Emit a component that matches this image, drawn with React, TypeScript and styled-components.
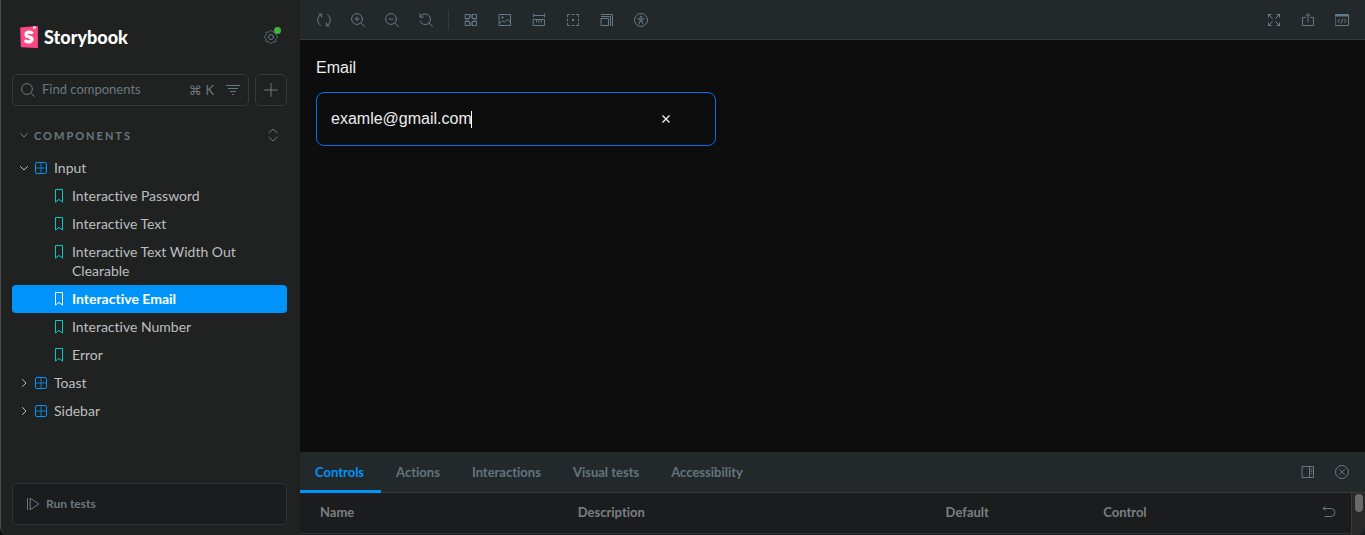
import React from "react";
import styled, { createGlobalStyle } from "styled-components";

const c = {
  side: "#202221",
  bar: "#23282b",
  canvas: "#0d0d0d",
  panel: "#1b1c1d",
  border: "#363a3b",
  muted: "#6b7880",
  icon: "#657a86",
  tab: "#62757f",
  text: "#bcbfc0",
  accent: "#0094fb",
  teal: "#00ccc5",
};

const GlobalStyle = createGlobalStyle`
  *, *::before, *::after { box-sizing: border-box; }
  body { margin: 0; background: ${c.canvas}; font-family: Lato, "Noto Sans", sans-serif; font-size: 14px; font-variant-ligatures: none; color: ${c.text}; }
  button, input { font: inherit; font-variant-ligatures: none; color: inherit; background: none; border: 0; padding: 0; margin: 0; outline: none; }
  button { cursor: pointer; }
  a { color: inherit; text-decoration: none; }
  ul { list-style: none; margin: 0; padding: 0; }
  svg { display: block; flex: none; }
`;

const Shell = styled.div`
  display: grid;
  grid-template-columns: 300px minmax(0, 1fr);
  min-height: 100vh;
`;

const Sidebar = styled.aside`
  display: flex;
  flex-direction: column;
  background: ${c.side};
  border-left: 1px solid #4b4e4e;
  border-bottom-left-radius: 8px;
  padding: 22px 13px 10px 11px;
`;

const Brand = styled.header`
  display: flex;
  align-items: center;
  justify-content: space-between;
  height: 30px;
  padding: 0 2px 0 8px;
`;

const BrandLink = styled.a`
  display: flex;
  align-items: center;
  gap: 6px;
  color: #ffffff;
  font-size: 18px;
  font-weight: 900;
`;

const SettingsButton = styled.button`
  position: relative;
  display: grid;
  place-items: center;
  width: 28px;
  height: 28px;
  color: ${c.icon};
`;

const Dot = styled.span`
  position: absolute;
  top: 4px;
  right: 4px;
  width: 7px;
  height: 7px;
  border-radius: 50%;
  background: #42b13c;
`;

const SearchRow = styled.div`
  display: flex;
  gap: 6px;
  margin-top: 22px;
`;

const SearchBox = styled.label`
  display: flex;
  align-items: center;
  flex: 1;
  min-width: 0;
  height: 32px;
  padding: 0 8px;
  border: 1px solid ${c.border};
  border-radius: 5px;
  color: ${c.muted};
`;

const SearchInput = styled.input`
  flex: 1;
  min-width: 0;
  margin-left: 7px;
  padding-bottom: 2px;
  font-size: 13px;
  &::placeholder { color: ${c.muted}; opacity: 1; }
`;

const Shortcut = styled.kbd`
  display: flex;
  align-items: center;
  gap: 4px;
  margin-right: 12px;
  font-family: Lato, "DejaVu Sans", sans-serif;
  font-size: 13px;
`;

const AddButton = styled.button`
  display: grid;
  place-items: center;
  width: 32px;
  height: 32px;
  border: 1px solid ${c.border};
  border-radius: 5px;
  color: ${c.icon};
`;

const SectionHead = styled.div`
  display: flex;
  align-items: center;
  justify-content: space-between;
  height: 28px;
  margin: 15px 0 5px;
  padding: 0 7px;
  color: ${c.muted};
`;

const SectionButton = styled.button`
  display: flex;
  align-items: center;
  gap: 6px;
  font-size: 11px;
  font-weight: 700;
  letter-spacing: 2px;
`;

const PlainButton = styled.button`
  display: grid;
  place-items: center;
  color: ${c.icon};
`;

const Item = styled.a<{ $child?: boolean; $active?: boolean }>`
  display: flex;
  align-items: flex-start;
  gap: ${(p) => (p.$child ? 8 : 6)}px;
  min-height: 28px;
  padding: 4px 30px 5px ${(p) => (p.$child ? 42 : 7)}px;
  line-height: 19px;
  border-radius: 4px;
  color: ${(p) => (p.$active ? "#ffffff" : c.text)};
  background: ${(p) => (p.$active ? c.accent : "transparent")};
  font-weight: ${(p) => (p.$active ? 700 : 400)};
  svg { margin-top: 3px; }
`;

const FolderIcon = styled.span`
  color: ${c.accent};
`;

const RunTests = styled.button`
  display: flex;
  align-items: center;
  gap: 6px;
  height: 42px;
  margin-top: auto;
  padding: 0 13px;
  border: 1px solid #303334;
  border-radius: 4px;
  background: ${c.panel};
  color: ${c.muted};
  font-size: 12px;
  font-weight: 700;
`;

const RunLabel = styled.span`
  padding-bottom: 2px;
`;

const Main = styled.main`
  display: flex;
  flex-direction: column;
  min-width: 0;
`;

const Toolbar = styled.div`
  display: flex;
  justify-content: space-between;
  height: 40px;
  padding: 0 9px 0 10px;
  background: ${c.bar};
  border-bottom: 1px solid ${c.border};
`;

const Group = styled.div`
  display: flex;
  align-items: center;
  gap: 6px;
`;

const ToolButton = styled.button`
  display: grid;
  place-items: center;
  width: 28px;
  height: 28px;
  color: ${c.icon};
`;

const Divider = styled.span`
  width: 1px;
  height: 20px;
  margin: 0 2px;
  background: ${c.border};
`;

const Canvas = styled.section`
  flex: 1;
  padding: 16px;
  color: #ededed;
  font-family: "Liberation Sans", Arial, sans-serif;
  font-size: 16px;
`;

const FieldLabel = styled.label`
  display: block;
  line-height: 24px;
  margin-bottom: 12px;
`;

const Field = styled.div`
  display: flex;
  align-items: center;
  width: 400px;
  max-width: 100%;
  height: 54px;
  padding: 0 41px 0 14px;
  border: 1px solid #0070f3;
  border-radius: 8px;
`;

const EmailInput = styled.input`
  field-sizing: content;
  caret-color: transparent;
`;

const Caret = styled.span`
  width: 1px;
  height: 17px;
  margin-left: -1px;
  background: #ffffff;
`;

const ClearButton = styled.button`
  display: grid;
  place-items: center;
  width: 16px;
  height: 24px;
  margin-left: auto;
`;

const Panel = styled.section`
  background: ${c.panel};
`;

const TabBar = styled.div`
  display: flex;
  justify-content: space-between;
  height: 41px;
  padding-right: 9px;
  background: ${c.bar};
  border-bottom: 1px solid ${c.border};
`;

const Tabs = styled.div`
  display: flex;
`;

const Tab = styled.button<{ $active?: boolean }>`
  height: 41px;
  padding: 1px 17px 0 15px;
  border-bottom: 3px solid ${(p) => (p.$active ? c.accent : "transparent")};
  color: ${(p) => (p.$active ? c.accent : c.tab)};
  font-size: 13px;
  font-weight: 700;
`;

const PanelBody = styled.div`
  display: flex;
  height: 42px;
`;

const Table = styled.table`
  flex: 1;
  height: 41px;
  table-layout: fixed;
  border-collapse: collapse;
  border-bottom: 1px solid #303334;
  color: #7c7f80;
  font-size: 13px;
`;

const Th = styled.th<{ $width: number; $first?: boolean }>`
  width: ${(p) => p.$width}%;
  padding: 0 15px 2px ${(p) => (p.$first ? 20 : 15)}px;
  text-align: left;
  font-weight: 700;
`;

const ThInner = styled.div`
  display: flex;
  align-items: center;
  justify-content: space-between;
`;

const Scroll = styled.div`
  width: 14px;
  padding: 1px 0 0 3px;
  background: #282828;
  border-left: 1px solid #383838;
  border-bottom-right-radius: 8px;
`;

const Thumb = styled.div`
  width: 8px;
  height: 18px;
  border-radius: 4px;
  background: #696969;
`;

const Svg = ({ children }: { children: React.ReactNode }) => (
  <svg width="14" height="14" viewBox="0 0 14 14" fill="none" stroke="currentColor" strokeLinecap="round" strokeLinejoin="round" aria-hidden="true">
    {children}
  </svg>
);

// Outline of a cog with eight soft teeth
const cog = Array.from({ length: 96 }, (_, i) => {
  const a = (i / 96) * Math.PI * 2;
  const r = 5.9 + 0.65 * Math.cos(8 * a);
  return `${(7 + r * Math.cos(a)).toFixed(2)},${(7 + r * Math.sin(a)).toFixed(2)}`;
}).join(" ");

const icons = {
  sync: (
    <>
      <path d="M4.4 1.2A6.4 6.4 0 0 0 3.6 12.4M9.6 12.8A6.4 6.4 0 0 0 10.4 1.6" />
      <path d="M1.8 1.2h2.8V4M12.2 12.8H9.4V10" />
    </>
  ),
  zoomIn: (
    <>
      <circle cx="6" cy="6" r="5.4" />
      <path d="M10 10l3.5 3.5M6 4v4M4 6h4" />
    </>
  ),
  zoomOut: (
    <>
      <circle cx="6" cy="6" r="5.4" />
      <path d="M10 10l3.5 3.5M4 6h4" />
    </>
  ),
  zoomReset: <path d="M1 .8v3.4h3.4M1.3 3.8A5.4 5.4 0 1 1 1 8M10 10l3.5 3.5" />,
  grid: (
    <>
      <path d="M1.5 1.5h4v4h-4zM8.5 1.5h4v4h-4zM1.5 8.5h4v4h-4zM8.5 8.5h4v4h-4z" strokeLinejoin="miter" />
      <path d="M5 1h4v4H5zM1 5h4v4H1zM9 5h4v4H9zM5 9h4v4H5z" fill="currentColor" stroke="none" opacity=".4" />
    </>
  ),
  photo: (
    <>
      <path d="M1.5 1.5h11v11h-11zM1.5 10.5l3-3 2 2 3-3.5 3 3.5" strokeLinejoin="miter" />
      <circle cx="4.5" cy="4.5" r=".8" />
    </>
  ),
  ruler: <path d="M1.5 1v3M12.5 1v3M1.5 2.5h11M1.5 6.5h11v6h-11zM4.5 6.5V9M7 6.5v3M9.5 6.5V9" strokeLinejoin="miter" />,
  outline: (
    <>
      <path d="M1.5 4V1.5H4M10 1.5h2.5V4M12.5 10v2.5H10M4 12.5H1.5V10M5.5 1.5h3M5.5 12.5h3M1.5 5.5v3M12.5 5.5v3" strokeLinecap="butt" strokeLinejoin="miter" />
      <path d="M6 6h2v2H6z" fill="currentColor" stroke="none" />
    </>
  ),
  grow: <path d="M1.5 5.5h7v7h-7zM1.5 3.5h9v9M1.5 1.5h11v11" strokeLinecap="square" strokeLinejoin="miter" />,
  access: (
    <>
      <circle cx="7" cy="7" r="6.5" />
      <circle cx="7" cy="3.6" r=".7" fill="currentColor" />
      <path d="M3.8 5.6L7 6l3.2-.4M6.1 6v2.2L5 11M7.9 6v2.2L9 11M6.1 8.2h1.8" />
    </>
  ),
  expand: <path d="M1.5 4.2V1.5h2.7M9.8 1.5h2.7v2.7M12.5 9.8v2.7H9.8M4.2 12.5H1.5V9.8M1.5 1.5L5.3 5.3M12.5 1.5L8.7 5.3M12.5 12.5L8.7 8.7M1.5 12.5l3.8-3.8" />,
  share: <path d="M4 4.5H1.5v8h11v-8H10M7 9V1M4.7 3L7 .8 9.3 3" />,
  code: (
    <>
      <path d="M.5 1.5h13v11H.5z" strokeLinejoin="miter" />
      <path d="M1 2.5h12" strokeWidth="2" />
      <path d="M4.5 6.3L2.8 8l1.7 1.7M9.5 6.3L11.2 8 9.5 9.7M7.7 6l-1.4 4" />
    </>
  ),
  sideBar: <path d="M1.5 1.5h11v11h-11zM8.5 1.5v11M10 4.5h1M10 6.5h1M10 8.5h1" strokeLinejoin="miter" />,
  close: (
    <>
      <circle cx="7" cy="7" r="6.5" />
      <path d="M4.6 4.6l4.8 4.8M9.4 4.6L4.6 9.4" />
    </>
  ),
  undo: <path d="M3.3 1.5L1.3 3.5l2 2M1.3 3.5h7.6a4 4 0 0 1 0 8H3" />,
  plus: <path d="M7 .5v13M.5 7h13" />,
  search: (
    <>
      <circle cx="6" cy="6" r="5.4" />
      <path d="M10 10l3.4 3.4" />
    </>
  ),
  filter: <path d="M.5 2.5h13M2.5 5.5h9M4.5 8.5h5M6.5 11.5h1" />,
  run: <path d="M1.5 1.5v11M4.5 1.5L13 7l-8.5 5.5z" />,
  component: (
    <>
      <path d="M7 1.5v11M1.5 7h11" opacity=".8" />
      <rect x="1.5" y="1.5" width="11" height="11" rx="1.5" />
    </>
  ),
  gear: (
    <>
      <polygon points={cog} />
      <circle cx="7" cy="7" r="2.5" />
    </>
  ),
  updown: <path d="M3 4.8L7 1l4 3.8M3 9.2L7 13l4-3.8" />,
};

const Chevron = ({ open }: { open?: boolean }) => (
  <svg width="9" height="14" viewBox="0 0 9 14" fill="none" stroke="currentColor" strokeLinecap="round" strokeLinejoin="round" aria-hidden="true">
    <path d={open ? "M1.5 5.5L5 9l3.5-3.5" : "M3.5 3.5L7 7l-3.5 3.5"} />
  </svg>
);

const Bookmark = ({ color }: { color: string }) => (
  <svg width="10" height="14" viewBox="0 0 10 14" fill="none" stroke={color} aria-hidden="true">
    <path d="M1.5.5h7v12.6L5 10.4l-3.5 2.7z" />
  </svg>
);

const Logo = () => (
  <svg width="18" height="22" viewBox="0 0 18 22" aria-hidden="true">
    <path d="M.2 1.4L17 .1a.8.8 0 0 1 .9.8v20.3a.8.8 0 0 1-.9.8L1.6 21.3a.8.8 0 0 1-.8-.8z" fill="#ff4785" />
    <path d="M13.2.4l2.3-.2.1 3-1.1-.9-1.4 1z" fill="#ffffff" />
    <text x="9" y="17" textAnchor="middle" fill="#ffffff" stroke="#ffffff" strokeWidth=".9" fontFamily="Lato" fontWeight="900" fontSize="17">S</text>
  </svg>
);

const stories = [
  "Interactive Password",
  "Interactive Text",
  "Interactive Text Width Out Clearable",
  "Interactive Email",
  "Interactive Number",
  "Error",
];

type IconName = keyof typeof icons;
const Tool = ({ name, label }: { name: IconName; label: string }) => (
  <ToolButton aria-label={label}><Svg>{icons[name]}</Svg></ToolButton>
);

const Folder = ({ name, open }: { name: string; open?: boolean }) => (
  <Item href="#">
    <Chevron open={open} />
    <FolderIcon><Svg>{icons.component}</Svg></FolderIcon>
    {name}
  </Item>
);

export default function App() {
  return (
    <>
      <GlobalStyle />
      <Shell>
        <Sidebar>
          <Brand>
            <BrandLink href="#"><Logo />Storybook</BrandLink>
            <SettingsButton aria-label="Settings"><Svg>{icons.gear}</Svg><Dot /></SettingsButton>
          </Brand>
          <SearchRow>
            <SearchBox>
              <Svg>{icons.search}</Svg>
              <SearchInput type="text" placeholder="Find components" aria-label="Find components" />
              <Shortcut><span>⌘</span><span>K</span></Shortcut>
              <PlainButton aria-label="Filter"><Svg>{icons.filter}</Svg></PlainButton>
            </SearchBox>
            <AddButton aria-label="Create story"><Svg>{icons.plus}</Svg></AddButton>
          </SearchRow>
          <SectionHead>
            <SectionButton><Chevron open />COMPONENTS</SectionButton>
            <PlainButton aria-label="Expand all"><Svg>{icons.updown}</Svg></PlainButton>
          </SectionHead>
          <nav>
            <Folder name="Input" open />
            <ul>
              {stories.map((s) => {
                const active = s === "Interactive Email";
                return (
                  <li key={s}>
                    <Item href="#" $child $active={active}>
                      <Bookmark color={active ? "#ffffff" : c.teal} />
                      {s}
                    </Item>
                  </li>
                );
              })}
            </ul>
            <Folder name="Toast" />
            <Folder name="Sidebar" />
          </nav>
          <RunTests><Svg>{icons.run}</Svg><RunLabel>Run tests</RunLabel></RunTests>
        </Sidebar>
        <Main>
          <Toolbar>
            <Group>
              <Tool name="sync" label="Remount" />
              <Tool name="zoomIn" label="Zoom in" />
              <Tool name="zoomOut" label="Zoom out" />
              <Tool name="zoomReset" label="Reset zoom" />
              <Divider />
              <Tool name="grid" label="Grid" />
              <Tool name="photo" label="Background" />
              <Tool name="ruler" label="Measure" />
              <Tool name="outline" label="Outline" />
              <Tool name="grow" label="Viewport" />
              <Tool name="access" label="Vision" />
            </Group>
            <Group>
              <Tool name="expand" label="Full screen" />
              <Tool name="share" label="Share" />
              <Tool name="code" label="Open in editor" />
            </Group>
          </Toolbar>
          <Canvas>
            <FieldLabel htmlFor="email">Email</FieldLabel>
            <Field>
              <EmailInput id="email" type="text" defaultValue="examle@gmail.com" />
              <Caret />
              <ClearButton aria-label="Clear">
                <svg width="8" height="8" viewBox="0 0 8 8" stroke="currentColor" strokeWidth="1.4" aria-hidden="true">
                  <path d="M.5.5l7 7M7.5.5l-7 7" />
                </svg>
              </ClearButton>
            </Field>
          </Canvas>
          <Panel>
            <TabBar>
              <Tabs>
                <Tab $active>Controls</Tab>
                <Tab>Actions</Tab>
                <Tab>Interactions</Tab>
                <Tab>Visual tests</Tab>
                <Tab>Accessibility</Tab>
              </Tabs>
              <Group>
                <Tool name="sideBar" label="Panel position" />
                <Tool name="close" label="Hide panel" />
              </Group>
            </TabBar>
            <PanelBody>
              <Table>
                <thead>
                  <tr>
                    <Th $width={25} $first>Name</Th>
                    <Th $width={35}>Description</Th>
                    <Th $width={15}>Default</Th>
                    <Th $width={25}>
                      <ThInner>
                        Control
                        <PlainButton aria-label="Reset controls"><Svg>{icons.undo}</Svg></PlainButton>
                      </ThInner>
                    </Th>
                  </tr>
                </thead>
              </Table>
              <Scroll><Thumb /></Scroll>
            </PanelBody>
          </Panel>
        </Main>
      </Shell>
    </>
  );
}
